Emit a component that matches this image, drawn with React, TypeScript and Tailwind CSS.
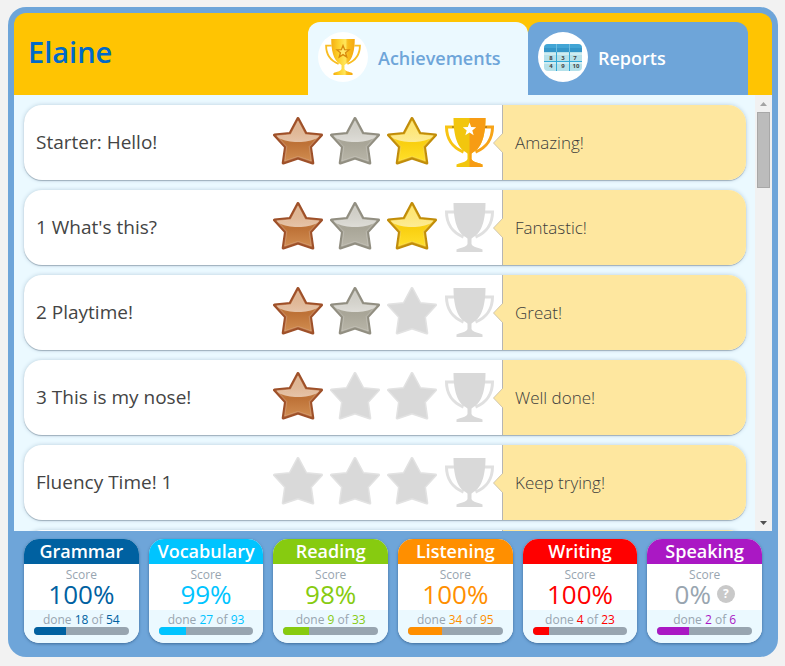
import React from "react";

type Tone = "bronze" | "silver" | "gold" | "empty";

const STAR =
  "M25 1.5 L33 16.500 L48.500 18 L37.500 30 L39.800 46 L25 41 L10.200 46 L12.500 30 L1.500 18 L17 16.500 Z";

const TONES = {
  bronze: { edge: "#9e5029", rim: "#b4683a", top: "#d7a67c", mid: "#bd7136", low: "#d08c50", glow: "#fff6ee" },
  silver: { edge: "#918e81", rim: "#a29f92", top: "#c2c0b6", mid: "#a8a597", low: "#b8b5a8", glow: "#ffffff" },
  gold: { edge: "#c08c0a", rim: "#dba80c", top: "#ffe052", mid: "#f9cf10", low: "#ffdf2a", glow: "#fffde8" },
};

function StarDefs() {
  return (
    <svg className="absolute size-0" aria-hidden="true">
      <defs>
        {(["bronze", "silver", "gold"] as const).map((t) => (
          <React.Fragment key={t}>
            <linearGradient id={`body-${t}`} x1="0" y1="0" x2="0" y2="1">
              <stop offset="0" stopColor={TONES[t].top} />
              <stop offset="0.55" stopColor={TONES[t].mid} />
              <stop offset="1" stopColor={TONES[t].low} />
            </linearGradient>
            <linearGradient id={`gloss-${t}`} x1="0" y1="0" x2="0" y2="1">
              <stop offset="0" stopColor={TONES[t].glow} stopOpacity="0.2" />
              <stop offset="0.5" stopColor={TONES[t].glow} stopOpacity="0.6" />
            </linearGradient>
          </React.Fragment>
        ))}
        <clipPath id="gloss-area">
          <path d="M0 0 H50 V19 Q25 31 0 19 Z" />
        </clipPath>
        <linearGradient id="cup-shine" x1="0" y1="0" x2="1" y2="0">
          <stop offset="0" stopColor="#f5ae10" />
          <stop offset="0.3" stopColor="#fdd02c" />
          <stop offset="0.6" stopColor="#ffe65c" />
          <stop offset="0.7" stopColor="#f9bd1c" />
          <stop offset="1" stopColor="#f5a70e" />
        </linearGradient>
      </defs>
    </svg>
  );
}

function Star({ tone }: { tone: Tone }) {
  if (tone === "empty") {
    return (
      <svg className="size-[50px]" viewBox="0 0 50 50" aria-label="Not earned" role="img">
        <path d={STAR} fill="#d9d9d9" stroke="#e2e2e2" strokeWidth="3" strokeLinejoin="round" />
        <path d={STAR} fill="#d9d9d9" />
      </svg>
    );
  }
  const c = TONES[tone];
  return (
    <svg className="size-[50px]" viewBox="0 0 50 50" aria-label={tone} role="img">
      <path d={STAR} fill={c.edge} stroke={c.edge} strokeWidth="3" strokeLinejoin="round" />
      <g transform="translate(25 26) scale(.97) translate(-25 -26)">
        <path d={STAR} fill={c.rim} />
      </g>
      <g transform="translate(25 26) scale(.9) translate(-25 -26)">
        <path d={STAR} fill={`url(#body-${tone})`} stroke={c.glow} strokeOpacity="0.25" strokeWidth="1" />
        <g clipPath="url(#gloss-area)">
          <path d={STAR} fill={`url(#gloss-${tone})`} />
        </g>
      </g>
    </svg>
  );
}

const CUP = "M8.5 0 H40.5 C40.5 14 38 29 28.5 34 L26.5 35.5 H22.5 L20.5 34 C11 29 8.500 14 8.5 0 Z";
const HANDLES =
  "M9 9 H1.5 C1.500 20 7 29.500 18.500 34 M40 9 H47.500 C47.500 20 42 29.500 30.500 34";
const FOOT = "M22.500 34 H26.500 V41 C28 44.500 33 44.500 37.500 46.500 V49 H11.500 V46.500 C16 44.500 21 44.500 22.500 41 Z";

function Trophy({ won }: { won: boolean }) {
  if (!won) {
    return (
      <svg className="size-[50px]" viewBox="-1 -1 50 50" aria-label="Not earned" role="img">
        <path d={HANDLES} fill="none" stroke="#e0e0e0" strokeWidth="3" />
        <path d={CUP} fill="#d9d9d9" />
        <path d={FOOT} fill="#d9d9d9" />
      </svg>
    );
  }
  return (
    <svg className="size-[50px]" viewBox="-1 -1 50 50" aria-label="Trophy" role="img">
      <path d="M9 9 H1.500 C1.500 20 7 29.500 18.500 34" fill="none" stroke="#f8c413" strokeWidth="3" />
      <path d="M40 9 H47.500 C47.500 20 42 29.500 30.500 34" fill="none" stroke="#f7a418" strokeWidth="3" />
      <path d="M7.500 8 h1 v2 h-1 Z M40.500 8 h1 v2 h-1 Z" fill="#7c5a18" />
      <path d={CUP} fill="#f2c60e" />
      <path d={FOOT} fill="#f2c60e" />
      <path d="M24.500 0 H40.500 C40.500 14 38 29 28.500 34 L26.500 35.500 H24.500 Z" fill="#f79c14" />
      <path d="M24.500 35 H26.500 V41 C28 44.500 33 44.500 37.500 46.500 V49 H24.500 Z" fill="#f79c14" />
      <path
        d="M24.500 4.500 l1.700 4.600 5 .2 -3.900 3.100 1.400 4.800 -4.200 -2.800 -4.200 2.800 1.400 -4.800 -3.900 -3.100 5 -.2 Z"
        fill="#fff"
      />
    </svg>
  );
}

function TabTrophy() {
  return (
    <svg className="size-9" viewBox="0 0 49 49" aria-hidden="true">
      <path d={HANDLES} fill="none" stroke="#f9bd22" strokeWidth="2.500" />
      <path d={CUP} fill="url(#cup-shine)" />
      <path d={FOOT} fill="url(#cup-shine)" />
      <path
        d="M24.500 9 l2.200 5.600 6 .3 -4.700 3.800 1.600 5.800 -5.100 -3.300 -5.100 3.300 1.600 -5.800 -4.700 -3.800 6 -.3 Z"
        fill="#ffe769"
        stroke="#d88a0c"
        strokeWidth="1.800"
      />
    </svg>
  );
}

function CalendarIcon() {
  return (
    <svg className="h-[27px] w-[38px]" viewBox="0 0 38 27" aria-hidden="true">
      <rect width="38" height="27" rx="4" fill="#b5e1ea" />
      <path d="M0 8 V4 A4 4 0 0 1 4 0 H34 A4 4 0 0 1 38 4 V8 Z" fill="#42a5d5" />
      <path d="M0 4 H38 V8 H0 Z" fill="#3596c8" />
      <path d="M0 9 H38 V11 H0 Z M0 18 H38 V20 H0 Z" fill="#cfecf1" />
      <path d="M12.500 8 V27 M25.500 8 V27 M0 17.500 H38" stroke="#35aad8" strokeWidth="1" />
      <path d="M12.500 0 V8 M25.500 0 V8" stroke="#6fbde0" strokeWidth="1" />
      <g fill="#444" fontFamily="Open Sans, sans-serif" fontWeight="700" fontSize="6" textAnchor="middle">
        <text x="7" y="15.500">8</text>
        <text x="19" y="15.500">3</text>
        <text x="31" y="15.500">7</text>
        <text x="7" y="24">4</text>
        <text x="19" y="24">9</text>
        <text x="32" y="24">10</text>
      </g>
    </svg>
  );
}

interface Unit {
  title: string;
  message: string;
  earned: number;
}

const UNITS: Unit[] = [
  { title: "Starter: Hello!", message: "Amazing!", earned: 4 },
  { title: "1 What's this?", message: "Fantastic!", earned: 3 },
  { title: "2 Playtime!", message: "Great!", earned: 2 },
  { title: "3 This is my nose!", message: "Well done!", earned: 1 },
  { title: "Fluency Time! 1", message: "Keep trying!", earned: 0 },
  { title: "", message: "", earned: 0 },
];

const STAR_ORDER: Tone[] = ["bronze", "silver", "gold"];

function UnitRow({ unit }: { unit: Unit }) {
  return (
    <li className="flex h-[75px] shrink-0 rounded-[18px] bg-white shadow-[0_1px_1px_#9fb0bd,0_0_4px_#b9cfdd]">
      <div className="flex min-w-0 flex-1 items-center justify-between pr-2 pb-px pl-3">
        <h2 className="text-[19px] leading-6 font-medium text-[#444]">{unit.title}</h2>
        <div className="flex items-center gap-[7px]">
          {STAR_ORDER.map((tone, i) => (
            <Star key={tone} tone={unit.earned > i ? tone : "empty"} />
          ))}
          <Trophy won={unit.earned > 3} />
        </div>
      </div>
      <div className="relative flex w-[244px] items-center rounded-r-[18px] border-l border-[#b5b5b5] bg-[#fee79f] pl-3">
        <svg className="absolute top-7 -left-2.5 h-5 w-2.5" viewBox="0 0 10 20" aria-hidden="true">
          <path d="M10 0 L0.500 10 L10 20 Z" fill="#fee79f" />
          <path d="M10 0 L0.500 10 L10 20" fill="none" stroke="#c4bda8" strokeWidth="0.800" />
        </svg>
        <p className="text-[17px] leading-6 font-light text-[#3c3c3c]">{unit.message}</p>
      </div>
    </li>
  );
}

interface Skill {
  name: string;
  score: string;
  done: number;
  total: number;
  fill: string;
  ink: string;
  scoreInk: string;
  help?: boolean;
}

const SKILLS: Skill[] = [
  { name: "Grammar", score: "100%", done: 18, total: 54, fill: "bg-[#0061a1]", ink: "text-[#0061a1]", scoreInk: "text-[#0061a1]" },
  { name: "Vocabulary", score: "99%", done: 27, total: 93, fill: "bg-[#00c4ff]", ink: "text-[#00c4ff]", scoreInk: "text-[#00c4ff]" },
  { name: "Reading", score: "98%", done: 9, total: 33, fill: "bg-[#87cb10]", ink: "text-[#87cb10]", scoreInk: "text-[#87cb10]" },
  { name: "Listening", score: "100%", done: 34, total: 95, fill: "bg-[#ff8f00]", ink: "text-[#ff8f00]", scoreInk: "text-[#ff8f00]" },
  { name: "Writing", score: "100%", done: 4, total: 23, fill: "bg-[#ff0000]", ink: "text-[#ff0000]", scoreInk: "text-[#ff0000]" },
  { name: "Speaking", score: "0%", done: 2, total: 6, fill: "bg-[#aa18c4]", ink: "text-[#aa18c4]", scoreInk: "text-[#98a5b0]", help: true },
];

function SkillCard({ skill }: { skill: Skill }) {
  return (
    <section className="min-w-0 flex-1 overflow-hidden rounded-[15px] bg-white text-center text-[#98a5b0] shadow-[0_1px_3px_#3f6c9a]">
      <h3 className={`h-[25px] text-lg leading-[25px] font-semibold text-white ${skill.fill}`}>{skill.name}</h3>
      <div className="h-[46px] pt-1">
        <p className="text-xs leading-[14px]">Score</p>
        <div className="flex h-6 items-center justify-center gap-1.5">
          <span className={`text-[26px] leading-6 font-medium ${skill.scoreInk}`}>{skill.score}</span>
          {skill.help && (
            <button
              type="button"
              aria-label="About this score"
              className="flex size-[18px] items-center justify-center rounded-full bg-[#c9c9c9] text-xs font-bold text-white"
            >
              ?
            </button>
          )}
        </div>
      </div>
      <div className="h-[33px] bg-[#ebf9ff] px-2.5 pt-0.5">
        <p className="text-xs leading-[15px]">
          done <span className={`font-medium ${skill.ink}`}>{skill.done}</span> of{" "}
          <span className={`font-medium ${skill.ink}`}>{skill.total}</span>
        </p>
        <div
          role="progressbar"
          aria-label={`${skill.name} progress`}
          aria-valuenow={skill.done}
          aria-valuemax={skill.total}
          className="h-2 overflow-hidden rounded-full bg-[#98a5b0]"
        >
          <div className={`h-full ${skill.fill}`} style={{ width: `${(skill.done / skill.total) * 100}%` }} />
        </div>
      </div>
    </section>
  );
}

export default function App() {
  return (
    <main className="flex h-screen bg-[#f2f2f2] pt-[7px] pr-[7px] pb-[9px] pl-2 font-['Open_Sans',sans-serif]">
      <StarDefs />
      <div className="flex min-w-0 flex-1 flex-col overflow-hidden rounded-[18px] bg-[#6ea5d9] p-1.5">
        <header className="flex h-[82px] shrink-0 items-end justify-between rounded-t-xl bg-[#ffc402] pr-6 pl-3.5">
          <h1 className="self-start pt-5 text-[29px] leading-[38px] font-semibold text-[#0069c9]">Elaine</h1>
          <div role="tablist" className="flex h-[73px]">
            <button
              type="button"
              role="tab"
              aria-selected="true"
              className="flex w-[220px] items-start gap-2.5 rounded-t-xl bg-[#ebf9ff] p-2.5 text-lg font-semibold text-[#6ea5d9]"
            >
              <span className="flex size-[50px] items-center justify-center rounded-full bg-white">
                <TabTrophy />
              </span>
              <span className="leading-[52px]">Achievements</span>
            </button>
            <button
              type="button"
              role="tab"
              aria-selected="false"
              className="flex w-[220px] items-start gap-2.5 rounded-t-xl bg-[#6ea5d9] p-2.5 text-lg font-semibold text-white"
            >
              <span className="flex size-[50px] items-center justify-center rounded-full bg-white">
                <CalendarIcon />
              </span>
              <span className="leading-[52px]">Reports</span>
            </button>
          </div>
        </header>

        <div className="flex min-h-0 flex-1 bg-[#ebf9ff]">
          <ul className="flex min-w-0 flex-1 flex-col gap-2.5 overflow-hidden pt-2.5 pr-[9px] pl-2.5">
            {UNITS.map((unit, i) => (
              <UnitRow key={i} unit={unit} />
            ))}
          </ul>
          <div className="flex w-[17px] flex-col justify-between bg-[#f1f1f1]">
            <div>
              <button type="button" aria-label="Scroll up" className="flex h-[17px] w-full items-center justify-center">
                <svg className="h-1 w-[7px]" viewBox="0 0 7 4">
                  <path d="M0 4 L3.500 0 L7 4 Z" fill="#a3a3a3" />
                </svg>
              </button>
              <div className="mx-0.5 h-[76px] border border-[#a8a8a8] bg-[#bcbcbc]" />
            </div>
            <button type="button" aria-label="Scroll down" className="flex h-[17px] w-full items-center justify-center">
              <svg className="h-1 w-[7px]" viewBox="0 0 7 4">
                <path d="M0 0 L3.500 4 L7 0 Z" fill="#505050" />
              </svg>
            </button>
          </div>
        </div>

        <footer className="flex shrink-0 gap-2.5 px-2.5 pt-2 pb-2">
          {SKILLS.map((skill) => (
            <SkillCard key={skill.name} skill={skill} />
          ))}
        </footer>
      </div>
    </main>
  );
}
